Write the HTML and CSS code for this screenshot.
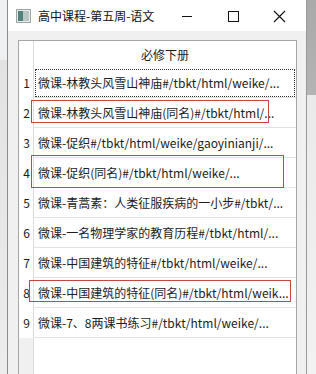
FILE: index.html
```html
<!DOCTYPE html>
<html lang="zh-CN">
<head>
  <meta charset="UTF-8" />
  <title>高中课程-第五周-语文</title>
  <link rel="stylesheet" href="styles.css">
</head>
<body>
  <div class="desktop">
    <div class="side left-side"></div>
    <div class="window">
      <div class="titlebar">
        <svg class="app-icon" width="15" height="14" viewBox="0 0 15 14">
          <rect x="0.5" y="0.5" width="14" height="13" fill="#e8eceb" stroke="#9aa5a3"/>
          <rect x="2" y="2" width="5" height="10" fill="#4f8178"/>
          <rect x="7" y="2" width="6" height="10" fill="#b9c8c5"/>
        </svg>
        <span class="title">高中课程-第五周-语文</span>
        <div class="controls">
          <svg class="ctl" width="46" height="30" viewBox="0 0 46 30"><line x1="18" y1="15.5" x2="28" y2="15.5" stroke="#111" stroke-width="1"/></svg>
          <svg class="ctl" width="46" height="30" viewBox="0 0 46 30"><rect x="18.5" y="10.5" width="10" height="10" fill="none" stroke="#111" stroke-width="1"/></svg>
          <svg class="ctl" width="46" height="30" viewBox="0 0 46 30"><path d="M18 10 L29 21 M29 10 L18 21" stroke="#111" stroke-width="1.1"/></svg>
        </div>
      </div>
      <div class="client">
        <div class="table">
          <div class="vheader">
            <div class="corner"></div>
            <div class="num">1</div>
            <div class="num">2</div>
            <div class="num">3</div>
            <div class="num">4</div>
            <div class="num">5</div>
            <div class="num">6</div>
            <div class="num">7</div>
            <div class="num">8</div>
            <div class="num">9</div>
            <div class="filler"></div>
          </div>
          <div class="cells">
            <div class="hcell">必修下册</div>
            <div class="cell focus">微课-林教头风雪山神庙#/tbkt/html/weike/...</div>
            <div class="cell">微课-林教头风雪山神庙(同名)#/tbkt/html/...</div>
            <div class="cell">微课-促织#/tbkt/html/weike/gaoyinianji/...</div>
            <div class="cell">微课-促织(同名)#/tbkt/html/weike/...</div>
            <div class="cell">微课-青蒿素：人类征服疾病的一小步#/tbkt/...</div>
            <div class="cell">微课-一名物理学家的教育历程#/tbkt/html/...</div>
            <div class="cell">微课-中国建筑的特征#/tbkt/html/weike/...</div>
            <div class="cell">微课-中国建筑的特征(同名)#/tbkt/html/weik...</div>
            <div class="cell">微课-7、8两课书练习#/tbkt/html/weike/...</div>
          </div>
          <div class="mark mark-2"></div>
          <div class="mark mark-4"></div>
          <div class="mark mark-8"></div>
        </div>
      </div>
    </div>
    <div class="side right-side"></div>
  </div>
</body>
</html>
```

FILE: styles.css
```css
html, body {
  margin: 0;
  padding: 0;
}
body {
  width: 316px;
  height: 374px;
  overflow: hidden;
  font-family: "Noto Sans CJK SC", sans-serif;
  font-size: 12px;
  color: #1c1c1c;
  background: #e4e4e4;
}
.desktop {
  display: flex;
  height: 374px;
}
.side {
  flex: none;
}
.left-side {
  width: 7px;
  background: linear-gradient(to bottom, #eef0f2 0, #eef0f2 60px, #e2e2e2 60px, #ececec 100%);
}
.right-side {
  width: 9px;
  background: linear-gradient(to bottom, #a9a9a9 0, #b4b4b4 95px, #eaeaea 95px, #f2f2f2 100%);
}
.window {
  width: 298px;
  flex: none;
  display: flex;
  flex-direction: column;
  border-left: 1px solid #8c8c8c;
  border-right: 1px solid #9a9a9a;
  background: #f0f0f0;
}
.titlebar {
  height: 31px;
  flex: none;
  display: flex;
  align-items: center;
  background: #fff;
}
.app-icon {
  margin-left: 8px;
  margin-top: 1px;
}
.title {
  margin-left: 7px;
  color: #111;
  line-height: 16px;
}
.controls {
  margin-left: auto;
  display: flex;
  align-items: center;
  margin-right: 4px;
}
.ctl {
  display: block;
}
.client {
  flex: 1;
  padding: 9px 9px 0 10px;
  display: flex;
  flex-direction: column;
}
.table {
  position: relative;
  flex: 1;
  display: flex;
  border: 1px solid #a6a6a6;
  border-bottom: none;
  background: #fff;
}
.vheader {
  width: 14px;
  flex: none;
  display: flex;
  flex-direction: column;
  border-right: 1px solid #dcdcdc;
}
.corner {
  height: 27px;
  background: #fff;
}
.num {
  height: 30px;
  line-height: 30px;
  text-align: center;
  padding-left: 1px;
  background: #fff;
}
.filler {
  flex: 1;
  background: #f0f0f0;
}
.cells {
  flex: 1;
  display: flex;
  flex-direction: column;
  min-width: 0;
}
.hcell {
  height: 27px;
  line-height: 27px;
  text-align: center;
}
.cell {
  height: 30px;
  line-height: 29px;
  box-sizing: border-box;
  padding-left: 4px;
  border-bottom: 1px solid #e2e2e2;
  white-space: nowrap;
  overflow: hidden;
}
.focus {
  outline: 1px dotted #333;
  outline-offset: -2px;
}
.mark {
  position: absolute;
  border: 1px solid #c4463f;
  box-sizing: border-box;
}
.mark-2 {
  left: 12px;
  top: 59px;
  width: 238px;
  height: 23px;
}
.mark-4 {
  left: 12px;
  top: 114px;
  width: 253px;
  height: 33px;
}
.mark-8 {
  left: 10px;
  top: 239px;
  width: 262px;
  height: 22px;
}
```
